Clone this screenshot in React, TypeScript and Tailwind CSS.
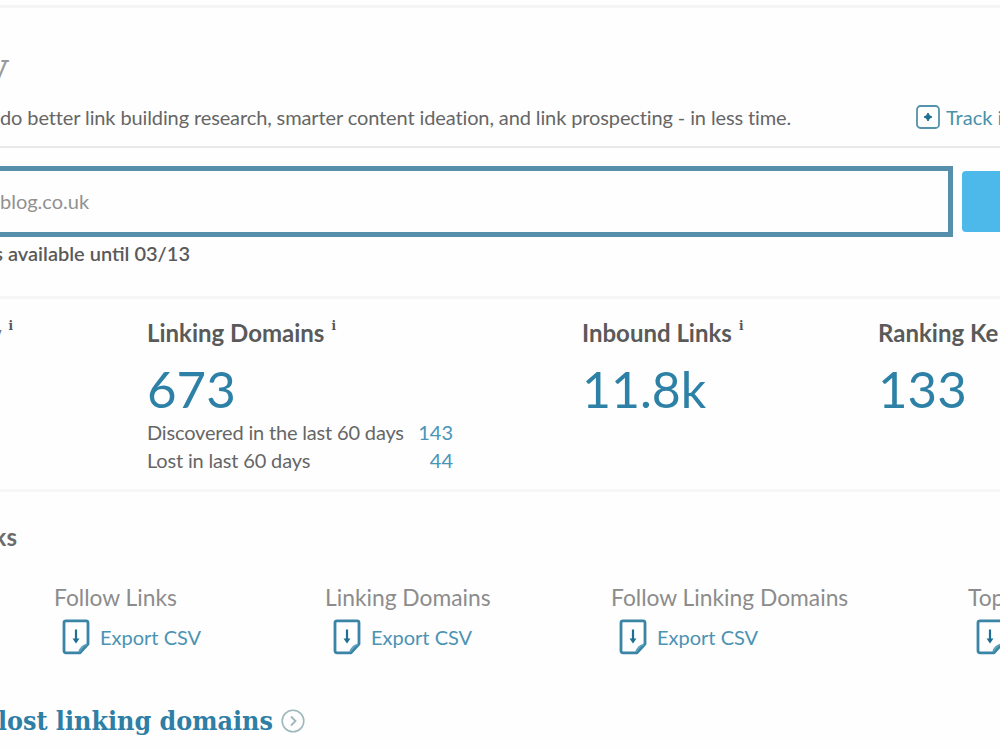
type Metric = {
  label: string;
  value: string;
  valueClass: string;
  width: string;
  info: boolean;
  details?: { text: string; count: string }[];
};

const metrics: Metric[] = [
  {
    label: 'Linking Domains',
    value: '673',
    valueClass: 'text-[51px]',
    width: 'w-[435px]',
    info: true,
    details: [
      { text: 'Discovered in the last 60 days', count: '143' },
      { text: 'Lost in last 60 days', count: '44' },
    ],
  },
  { label: 'Inbound Links', value: '11.8k', valueClass: 'text-[50px]', width: 'w-[296px]', info: true },
  { label: 'Ranking Ke', value: '133', valueClass: 'text-[51px]', width: 'w-[122px]', info: false },
];

const exportsList = [
  { label: 'Follow Links', width: 'w-[271px]' },
  { label: 'Linking Domains', width: 'w-[286px]' },
  { label: 'Follow Linking Domains', width: 'w-[357px]' },
  { label: 'Top', width: 'w-[31px]' },
];

function TrackIcon() {
  return (
    <svg width="24" height="24" viewBox="0 0 24 24" fill="none" className="shrink-0">
      <rect x="1" y="1" width="22" height="22" rx="3.5" stroke="#5592ab" strokeWidth="1.8" />
      <path d="M12 8 13.4 10.6 16 12 13.4 13.4 12 16 10.6 13.4 8 12 10.6 10.6Z" fill="#1f6f90" stroke="#1f6f90" />
    </svg>
  );
}

function ExportIcon() {
  return (
    <svg width="28" height="36" viewBox="0 0 28 36" fill="none" className="shrink-0">
      <path
        d="M4 1.8H24Q26 1.8 26 3.8V25L18 33.8H4Q2 33.8 2 31.8V3.8Q2 1.8 4 1.8Z"
        stroke="#3a85a6"
        strokeWidth="2.8"
        strokeLinejoin="round"
      />
      <path d="M17 33Q19 27 25 25.5" stroke="#5b9fbd" strokeWidth="1.8" />
      <path d="M14 10.5V22" stroke="#1f6f94" strokeWidth="2.2" />
      <path d="M10.5 19.5H17.5L14 24.5Z" fill="#1f6f94" />
    </svg>
  );
}

function ArrowCircle() {
  return (
    <svg width="24" height="24" viewBox="0 0 24 24" fill="none" className="shrink-0">
      <circle cx="12" cy="12" r="10.8" stroke="#9fb8bb" strokeWidth="1.6" />
      <path d="M10 7.5 14.5 12 10 16.5" stroke="#9fb8bb" strokeWidth="1.8" />
    </svg>
  );
}

function InfoMark() {
  return <span className="ml-[7px] font-['DejaVu_Serif',serif] text-[12px] leading-4 text-[#555]">i</span>;
}

export default function App() {
  return (
    <div className="flex h-[749px] w-[1000px] flex-col overflow-hidden bg-[#fefefe] font-['Lato',sans-serif] whitespace-nowrap text-[#666]">
      <header className="mt-[5px] flex h-[143px] shrink-0 flex-col border-t-[3px] border-b-2 border-t-[#f5f5f5] border-b-[#e9e9e9]">
        <h1 className="mt-[38px] flex w-[9px] justify-end font-['DejaVu_Serif',serif] text-[38px] leading-[40px] text-[#999]">
          y
        </h1>
        <div className="mt-[11px] flex h-[40px] items-center">
          <p className="w-[916px] shrink-0 text-[20px] tracking-[-0.115px]">
            do better link building research, smarter content ideation, and link prospecting - in less time.
          </p>
          <a className="flex items-center gap-[6px] text-[20px] text-[#4b91ac]">
            <TrackIcon />
            Track i
          </a>
        </div>
      </header>

      <section className="flex h-[151px] shrink-0 flex-col border-b-[3px] border-[#f6f6f6] pt-[18px]">
        <div className="flex items-center gap-[9px]">
          <div className="flex h-[71px] w-[953px] shrink-0 items-center border-[5px] border-l-0 border-[#558fac] pb-[2px] text-[20px] text-[#919191]">
            blog.co.uk
          </div>
          <div className="h-[61px] w-[60px] shrink-0 rounded-[4px] bg-[#4db9ea]" />
        </div>
        <p className="mt-[2px] flex w-[190px] justify-end text-[20px] leading-[28px] font-semibold text-[#5a5a5a]">
          s available until 03/13
        </p>
      </section>

      <section className="flex h-[193px] shrink-0 border-b-[3px] border-[#f6f6f6] pt-[19px]">
        <div className="flex w-[147px] shrink-0">
          <div className="flex w-[13px] justify-end text-[20px] leading-[30px] font-bold text-[#777]">
            y
            <InfoMark />
          </div>
        </div>
        {metrics.map((metric) => (
          <div key={metric.label} className={`shrink-0 ${metric.width}`}>
            <h2 className="flex text-[24px] leading-[30px] font-bold text-[#5a5a5a]">
              {metric.label}
              {metric.info && <InfoMark />}
            </h2>
            <p className={`mt-[11px] leading-[60px] text-[#2d80a6] ${metric.valueClass}`}>{metric.value}</p>
            {metric.details?.map((row) => (
              <div key={row.text} className="-mt-px mb-px flex w-[306px] justify-between text-[20px] leading-[28px]">
                <span className="tracking-[-0.17px]">{row.text}</span>
                <span className="text-[#4a94b8]">{row.count}</span>
              </div>
            ))}
          </div>
        ))}
      </section>

      <section className="flex flex-col">
        <h2 className="mt-[28px] flex w-[17px] justify-end text-[24px] leading-[34px] font-bold text-[#6c6c6c]">
          ks
        </h2>
        <div className="mt-[28px] flex pl-[54px]">
          {exportsList.map((item) => (
            <div key={item.label} className={`shrink-0 ${item.width}`}>
              <h3 className="text-[22.8px] leading-[30px] text-[#8c8c8c]">{item.label}</h3>
              <a className="mt-[7px] flex items-center gap-[10px] pl-[8px] text-[20px] text-[#4b93b3]">
                <ExportIcon />
                Export CSV
              </a>
            </div>
          ))}
        </div>
        <div className="mt-[48px] flex items-center gap-[8px]">
          <h2 className="flex w-[273px] justify-end font-['DejaVu_Serif_Condensed','DejaVu_Serif',serif] text-[26.6px] leading-[36px] font-bold text-[#2f7ea6]">
            lost linking domains
          </h2>
          <ArrowCircle />
        </div>
      </section>
    </div>
  );
}
